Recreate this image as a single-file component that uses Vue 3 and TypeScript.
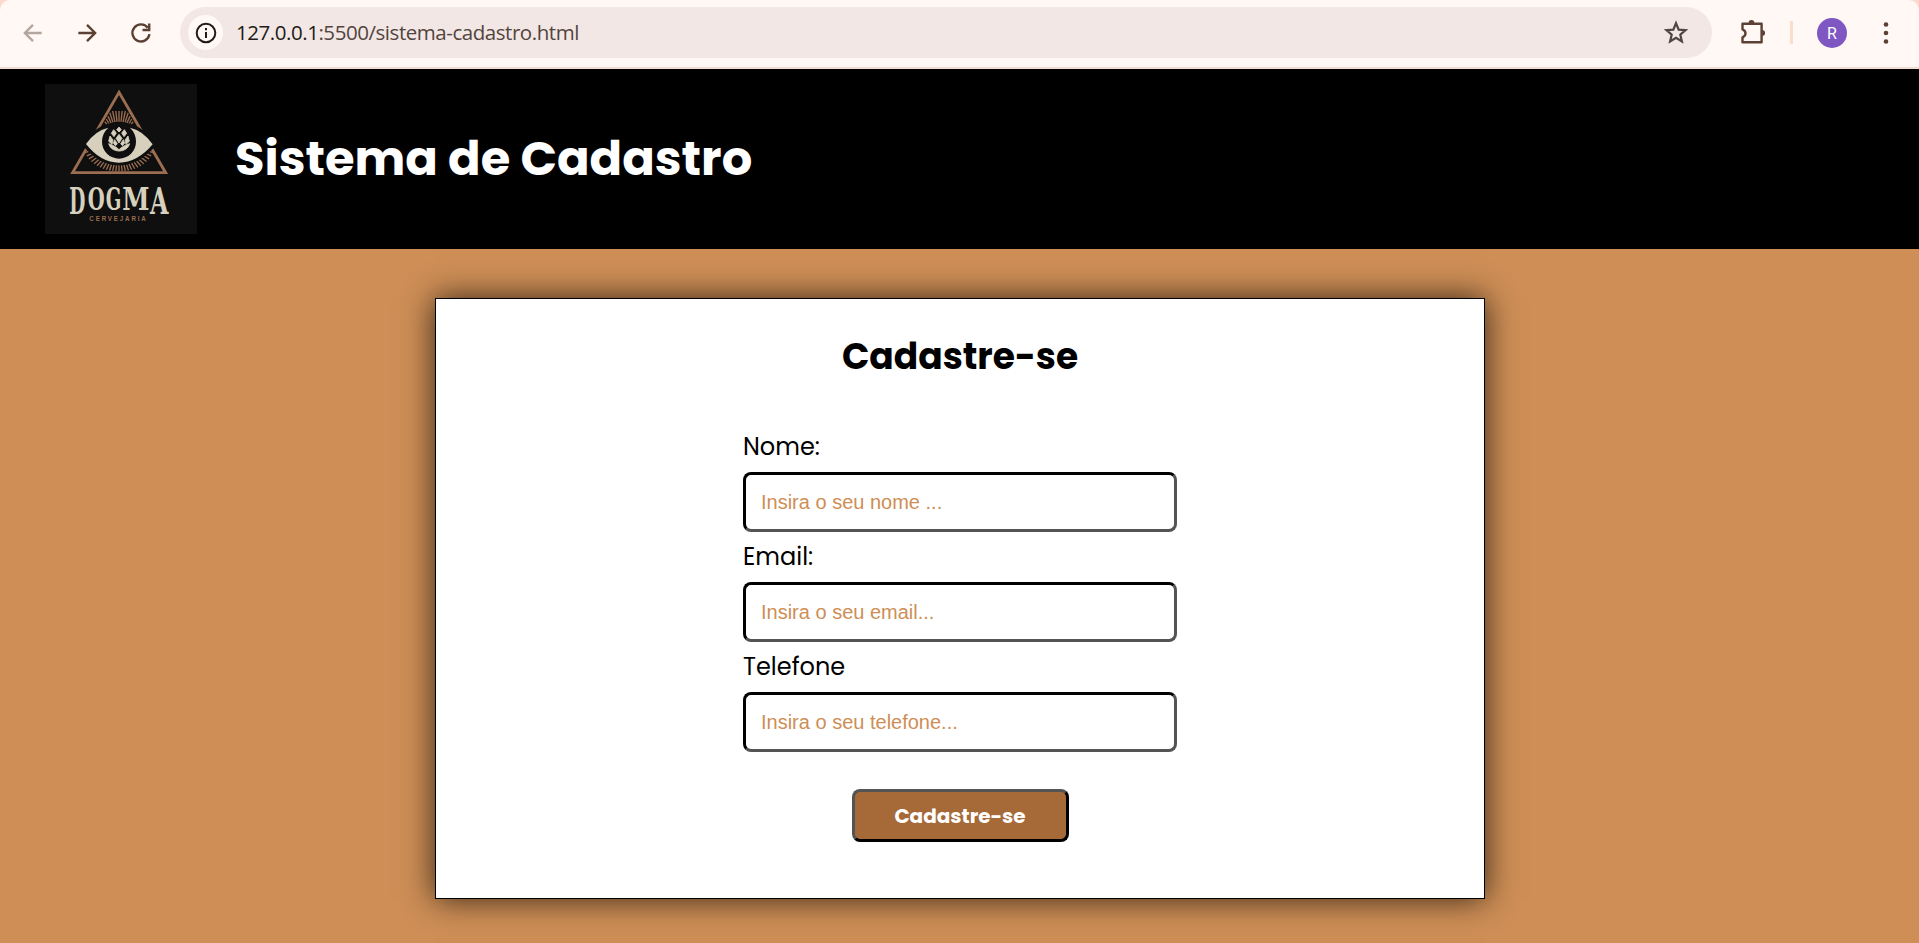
<script setup lang="ts">
interface Field {
  id: string
  label: string
  placeholder: string
}

const fields: Field[] = [
  { id: 'nome', label: 'Nome:', placeholder: 'Insira o seu nome ...' },
  { id: 'email', label: 'Email:', placeholder: 'Insira o seu email...' },
  { id: 'telefone', label: 'Telefone', placeholder: 'Insira o seu telefone...' },
]

const ray = (deg: number, inner: number, outer: number) => {
  const a = (deg * Math.PI) / 180
  return {
    x1: 267 + Math.cos(a) * inner,
    y1: 213 + Math.sin(a) * inner,
    x2: 267 + Math.cos(a) * outer,
    y2: 213 + Math.sin(a) * outer,
  }
}

// Upper rays stay inside the triangle's two slanted sides.
const topRays = Array.from({ length: 13 }, (_, i) => {
  const tilt = -36 + i * 6
  const t = (Math.abs(tilt) * Math.PI) / 180
  const outer = Math.min(90 / Math.cos(t), 76 / (Math.sin(t) + 0.574 * Math.cos(t)))
  return ray(tilt - 90, 58, outer)
})
const bottomRays = Array.from({ length: 25 }, (_, i) => {
  const deg = 19 + i * 5.92
  const s = Math.sin((deg * Math.PI) / 180)
  return ray(deg, 100 - 27 * s, 110 - 19 * s * s)
})
</script>

<template>
  <div class="window">
    <div class="toolbar">
      <svg class="nav" viewBox="0 0 24 24"><path d="M20 12H4.5M12 4.5 4.5 12l7.5 7.5" class="muted" /></svg>
      <svg class="nav" viewBox="0 0 24 24"><path d="M4 12h15.5M12 4.5l7.5 7.5-7.5 7.5" /></svg>
      <svg class="nav" viewBox="0 0 24 24"><path d="M18.3 7.2A7.9 7.9 0 1 0 19.8 13M19.6 3.2v6h-6.2" /></svg>
      <div class="address">
        <span class="info">
          <svg viewBox="0 0 24 24"><circle cx="12" cy="12" r="9.3" /><path d="M12 11v6M12 7v2.2" /></svg>
        </span>
        <span class="url"><b>127.0.0.1</b>:5500/sistema-cadastro.html</span>
        <svg class="star" viewBox="0 0 24 24"><path d="m12 3.6 2.3 5.5 5.9.5-4.5 3.9 1.35 5.8L12 16.2l-5.05 3.1 1.35-5.8-4.5-3.9 5.9-.5z" /></svg>
      </div>
      <svg class="puzzle" viewBox="0 0 26 26">
        <path d="M3.5 3.7h19.1v18.6H3.5v-5c4-1.6 4-6.4 0-8z" />
        <path class="solid" d="M9.6 3a2.9 2.9 0 0 1 5.8 0zM23.2 10a2.9 2.9 0 0 1 0 5.8z" />
      </svg>
      <span class="divider"></span>
      <span class="avatar">R</span>
      <svg class="dots" viewBox="0 0 6 24"><circle cx="3" cy="3.5" r="2.3" /><circle cx="3" cy="12" r="2.3" /><circle cx="3" cy="20.5" r="2.3" /></svg>
    </div>

    <header class="header">
      <svg class="logo" viewBox="45 42 456 450" preserveAspectRatio="none">
        <rect x="45" y="42" width="456" height="450" fill="#0f0f0f" />
        <path d="M267 67 128 308H407Z" fill="none" stroke="#9c6e51" stroke-width="8.5" />
        <g stroke="#9c6e51" stroke-width="4">
          <line v-for="(r, i) in topRays" :key="'t' + i" v-bind="r" />
          <line v-for="(r, i) in bottomRays" :key="'b' + i" v-bind="r" />
        </g>
        <path d="M155 222Q205 156 267 156T381 222Q330 286 267 286T155 222Z" fill="#0f0f0f" />
        <path d="M168 222Q195 182 235 173Q216 190 216 215A51 51 0 0 0 318 215Q318 190 300 173Q340 182 368 223Q322 278 267 278T168 222Z" fill="#d6d0bd" />
        <g fill="#d6d0bd" stroke="#d6d0bd" stroke-width="2.5" stroke-linejoin="round">
          <path d="m267 171 7 8-7 7-7-7zM251 179l8 10-7 11-8-10zM283 179l7 11-8 10-7-11zM267 193l9 12-9 14-9-14zM240 198l9 12-3 13-10-9zM294 198l4 16-10 9-3-13zM254 209l8 12-5 6-7-7zM280 209l4 11-7 7-5-6z" />
          <path d="M236 221q14 4 26 13l5 6 5-6q12-9 27-13a32 27 0 0 1-63 0z" />
        </g>
        <g class="brand">
          <text transform="translate(118 431) scale(.62 1.11)">D</text>
          <text transform="translate(173 421) scale(.65 .96)">O</text>
          <text transform="translate(227 421) scale(.61 .96)">G</text>
          <text transform="translate(277 421) scale(.82 .96)">M</text>
          <text transform="translate(360 431) scale(.79 1.11)">A</text>
        </g>
        <text class="tagline" transform="translate(178 453) scale(.8 1)">CERVEJARIA</text>
      </svg>
      <h1>Sistema de Cadastro</h1>
    </header>

    <main class="page">
      <form class="card" @submit.prevent>
        <h2>Cadastre-se</h2>
        <div class="fields">
          <div v-for="field in fields" :key="field.id" class="field">
            <label :for="field.id">{{ field.label }}</label>
            <input :id="field.id" type="text" :placeholder="field.placeholder" />
          </div>
        </div>
        <button type="submit">Cadastre-se</button>
      </form>
    </main>
  </div>
</template>

<style>
body {
  margin: 0;
  overflow: hidden;
  background: #fcd9c9;
}
</style>

<style scoped>
* {
  box-sizing: border-box;
}
.window {
  height: 943px;
  display: flex;
  flex-direction: column;
  font-family: Poppins, Inter, "Liberation Sans", sans-serif;
}
.toolbar {
  height: 69px;
  flex: none;
  display: flex;
  align-items: center;
  padding: 0 30px 2px 20px;
  background: #fff8f5;
  border-bottom: 2px solid #f3ddd3;
  border-radius: 10px 10px 0 0;
}
svg {
  flex: none;
}
.nav {
  width: 26px;
  height: 26px;
  margin-right: 28px;
  fill: none;
  stroke: #5c4033;
  stroke-width: 2.2;
}
.muted {
  stroke: #b5a59f;
}
.address {
  width: 1533px;
  height: 51px;
  margin-left: -2px;
  padding: 0 21.5px 0 8px;
  border-radius: 26px;
  background: #f2e7e4;
  display: flex;
  align-items: center;
}
.info {
  width: 35px;
  height: 35px;
  border-radius: 50%;
  background: #fff8f5;
  display: grid;
  place-items: center;
}
.info svg {
  width: 24px;
  height: 24px;
  fill: none;
  stroke: #221a17;
  stroke-width: 2;
}
.url {
  margin-left: 13px;
  padding-bottom: 2px;
  flex: 1;
  font: 20.5px "Open Sans", "Noto Sans", sans-serif;
  letter-spacing: -0.45px;
  color: #52443e;
  white-space: nowrap;
}
.url b {
  font-weight: 400;
  color: #221a17;
}
.star {
  width: 28px;
  height: 28px;
  fill: none;
  stroke: #52443e;
  stroke-width: 1.9;
}
.puzzle {
  width: 26px;
  height: 26px;
  margin-left: 27.5px;
  fill: none;
  stroke: #5c4033;
  stroke-width: 2.4;
  stroke-linejoin: round;
}
.solid {
  fill: #5c4033;
  stroke: none;
}
.divider {
  width: 3px;
  height: 23px;
  margin-left: 24.5px;
  background: #fcdccc;
}
.avatar {
  width: 30px;
  height: 30px;
  margin-left: 24.5px;
  border-radius: 50%;
  background: #7e57c2;
  color: #fff;
  font: 16px/31px Roboto, sans-serif;
  text-align: center;
}
.dots {
  width: 6px;
  height: 24px;
  margin-left: 36px;
  fill: #5c4033;
}
.header {
  height: 180px;
  flex: none;
  display: flex;
  align-items: center;
  padding-left: 45px;
  background: #000;
}
.logo {
  width: 152px;
  height: 150px;
}
.brand {
  fill: #d6d0bd;
  font: 700 100px "DejaVu Serif Condensed", "DejaVu Serif", serif;
}
.tagline {
  fill: #9c6e51;
  font: 700 23px "Liberation Sans", sans-serif;
  letter-spacing: 7.1px;
}
h1 {
  margin: 0 0 0 38px;
  color: #fff;
  font-size: 48px;
  line-height: 70px;
  font-weight: 700;
  white-space: nowrap;
}
.page {
  flex: 1;
  padding-top: 49px;
  background: #ce8e56;
}
.card {
  width: 1050px;
  height: 601px;
  margin: 0 auto;
  padding-left: 1px;
  border: 1px solid #000;
  background: #fff;
  box-shadow: 0 0 30px rgba(0, 0, 0, 0.75);
  display: flex;
  flex-direction: column;
  align-items: center;
}
h2 {
  margin: 33px 0 0;
  font-size: 36px;
  line-height: 50px;
  font-weight: 700;
}
.fields {
  width: 434px;
  margin-top: 43px;
}
.field {
  height: 110px;
}
label {
  display: block;
  height: 47px;
  font-size: 24px;
  line-height: 44px;
  font-weight: 400;
}
input {
  display: block;
  width: 434px;
  height: 60px;
  padding: 0 15px;
  border: 3px solid;
  border-color: #000 #545454 #545454 #000;
  border-radius: 8px;
  background: #fff;
  font: 20px "Liberation Sans", Arial, sans-serif;
}
input::placeholder {
  color: #ce8e56;
  opacity: 1;
}
button {
  width: 217px;
  height: 53px;
  margin-top: 34px;
  padding: 0;
  border: 3px solid;
  border-color: #545454 #000 #000 #545454;
  border-radius: 8px;
  background: #a66a38;
  color: #fff;
  font: 700 20px Poppins, Inter, sans-serif;
}
</style>
